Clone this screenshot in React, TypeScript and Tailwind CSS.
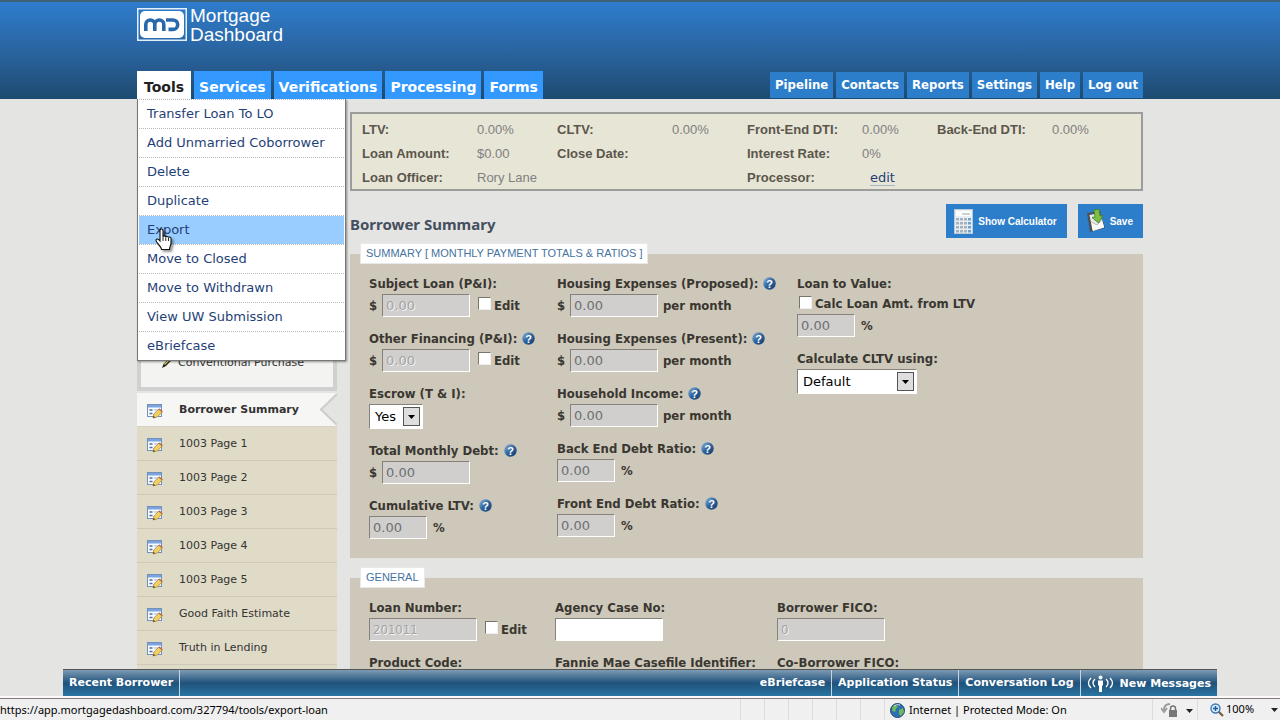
import React from "react";
import clsx from "clsx";

const tahoma = "font-['DejaVu_Sans_Condensed','DejaVu_Sans',sans-serif]";
const verdana = "font-['DejaVu_Sans',sans-serif]";
const arial = "font-['Liberation_Sans',sans-serif]";

const mainTabs = ["Tools", "Services", "Verifications", "Processing", "Forms"];
const accountTabs = [
  "Pipeline",
  "Contacts",
  "Reports",
  "Settings",
  "Help",
  "Log out",
];

const toolItems = [
  "Transfer Loan To LO",
  "Add Unmarried Coborrower",
  "Delete",
  "Duplicate",
  "Export",
  "Move to Closed",
  "Move to Withdrawn",
  "View UW Submission",
  "eBriefcase",
];

const pages = [
  "Borrower Summary",
  "1003 Page 1",
  "1003 Page 2",
  "1003 Page 3",
  "1003 Page 4",
  "1003 Page 5",
  "Good Faith Estimate",
  "Truth in Lending",
  "Closing Costs",
];

const Logo = () => (
  <svg width="50" height="33" viewBox="0 0 50 33" fill="none">
    <rect x="0.75" y="0.75" width="48.5" height="31.5" stroke="#e4f0fb" strokeWidth="1.5" />
    <rect x="3" y="3" width="44" height="27" rx="5" fill="#fff" />
    <path
      d="M8.800 23v-6.500a4.500 4.500 0 0 1 9 0V23M17.800 16.500a4.500 4.500 0 0 1 9 0V23"
      stroke="#2a68ad"
      strokeWidth="3.600"
    />
    <path
      d="M29 12h7a4.700 4.700 0 0 1 0 9.400h-4.500"
      stroke="#2a68ad"
      strokeWidth="3.600"
    />
  </svg>
);

const HandCursor = () => (
  <svg
    className="absolute left-4 top-3 z-10 drop-shadow-[2px_2px_1px_rgba(0,0,0,0.4)]"
    width="18"
    height="23"
    viewBox="0 0 18 23"
  >
    <path
      d="M5 2.500c0-2 3-2 3 0V9c0-1.500 2.800-1.500 2.800.3 0-1.300 2.700-1.200 2.700.5 0-1.200 2.500-1 2.500.7V15c0 2-1.500 3.500-1.500 6.500H6.500C6.500 18.500 1 14.500 1 12.500s2-2 4 .5z"
      fill="#fff"
      stroke="#111"
      strokeWidth="1.100"
    />
    <path d="M8 9v4M10.800 9.500V13M13.500 10v3" stroke="#111" strokeWidth="0.900" />
  </svg>
);

const PageIcon = () => (
  <svg width="16" height="16" viewBox="0 0 16 16" className="shrink-0">
    <rect x="0.500" y="1.500" width="14" height="12" fill="#f7faff" stroke="#7390b8" />
    <rect x="1" y="2" width="13" height="2.500" fill="#7ba3e0" />
    <path d="M2.500 7h3M2.500 10.500h3" stroke="#4f6ea3" strokeWidth="1.300" />
    <path d="M7 7h5M7 10.500h2" stroke="#9db3d6" />
    <path
      d="M6 15l.8-4 5.200-5 3.300 2.800-5 5.200z"
      fill="#f2cf62"
      stroke="#b08a42"
      strokeWidth="0.800"
    />
    <path d="M6 15l.6-2.300 1.600 1.500z" fill="#444" />
    <path d="M12 6l3.300 2.800" stroke="#b4683f" strokeWidth="1.400" />
  </svg>
);

const PencilIcon = () => (
  <svg width="12" height="12" viewBox="0 0 12 12" className="shrink-0">
    <path d="M1 11l1.500-4L8.500.8l2.500 2L5 9z" fill="#222" />
    <path d="M3.500 7.500L8.800 2.200" stroke="#e8d84a" strokeWidth="1.300" />
  </svg>
);

const HelpIcon = () => (
  <svg width="13" height="13" viewBox="0 0 13 13" className="ml-[5px] mb-[2px] shrink-0" aria-hidden="true">
    <defs>
      <linearGradient id="help" x1="0" y1="0" x2="1" y2="1">
        <stop offset="0" stopColor="#8fb6dc" />
        <stop offset="0.500" stopColor="#2f639c" />
        <stop offset="1" stopColor="#123a6c" />
      </linearGradient>
    </defs>
    <circle cx="6.500" cy="6.500" r="6.200" fill="url(#help)" />
    <text
      x="6.500"
      y="10.500"
      textAnchor="middle"
      fontSize="11"
      fontWeight="bold"
      fontFamily="Liberation Sans"
      fill="#fff"
    >
      ?
    </text>
  </svg>
);

const CalculatorIcon = () => (
  <svg width="19" height="25" viewBox="0 0 19 25">
    <rect x="0.500" y="0.500" width="18" height="24" fill="#e9eef2" stroke="#b9cbdb" />
    <rect x="2" y="2" width="15" height="5" fill="#fbfdff" />
    <path d="M8 5h8" stroke="#9aa7b3" />
    {[9, 13, 17, 21].map((y) =>
      [2, 6, 10, 14].map((x) => (
        <rect
          key={`${x}-${y}`}
          x={x}
          y={y}
          width="3"
          height="2.500"
          fill={x === 14 ? "#6fa3cf" : "#a5b1bc"}
        />
      ))
    )}
  </svg>
);

const SaveIcon = () => (
  <svg width="20" height="24" viewBox="0 0 20 24">
    <path d="M1 4l13-2 5 17-15 4z" fill="#4b5158" />
    <path d="M3.500 6l10-2 4.500 14-11.500 3.500z" fill="#e6e9e8" />
    <path d="M5.500 13l5.500 3 5-5.500 2.200 8L7 22z" fill="#fbfbf9" />
    <path d="M5.500 13l5.500 3 5-5.500" fill="none" stroke="#a4aaae" strokeWidth="0.800" />
    <path
      d="M8 1l5-1 1 7 3-.5-4.500 7.500L6 8.500l3-.5z"
      fill="#7cc043"
      stroke="#3e7d20"
      strokeWidth="0.800"
    />
  </svg>
);

type LabelProps = { htmlFor?: string; help?: boolean; children: React.ReactNode };

const Label = ({ htmlFor, help, children }: LabelProps) => (
  <div className="flex items-center h-5 whitespace-nowrap">
    <label htmlFor={htmlFor}>{children}</label>
    {help && <HelpIcon />}
  </div>
);

type InputProps = {
  id: string;
  value?: string;
  width: string;
  faded?: boolean;
  editable?: boolean;
};

const TextInput = ({ id, value = "", width, faded, editable }: InputProps) => (
  <input
    id={id}
    type="text"
    defaultValue={value}
    readOnly={!editable}
    className={clsx(
      "h-[23px] px-[3px] border border-t-[#85827c] border-l-[#85827c] border-b-white border-r-white font-normal text-[13px] outline-none",
      width,
      editable ? "bg-white text-black" : "bg-[#d0cfcd]",
      !editable && (faded ? "text-[#a3a3a3] [text-shadow:1px_1px_0_#f4f4f4]" : "text-[#6f6f6f]"),
      width === "w-[108px]" ? tahoma : verdana
    )}
  />
);

const CheckBox = ({ id, label }: { id: string; label: string }) => (
  <div className="flex items-center gap-[3px] whitespace-nowrap">
    <input
      id={id}
      type="checkbox"
      className="appearance-none w-[13px] h-[13px] mb-1 bg-white border border-t-[#77746e] border-l-[#77746e] border-b-[#eee] border-r-[#eee]"
    />
    <label htmlFor={id}>{label}</label>
  </div>
);

type MoneyProps = {
  id: string;
  label: string;
  help?: boolean;
  edit?: boolean;
  monthly?: boolean;
};

const MoneyField = ({ id, label, help, edit, monthly }: MoneyProps) => (
  <div>
    <Label htmlFor={id} help={help}>
      {label}
    </Label>
    <div className="flex items-center">
      <span className="w-[13px]">$</span>
      <TextInput id={id} value="0.00" width="w-[88px]" faded={edit} />
      {edit && (
        <div className="ml-2">
          <CheckBox id={`${id}-edit`} label="Edit" />
        </div>
      )}
      {monthly && <span className="ml-[5px] whitespace-nowrap">per month</span>}
    </div>
  </div>
);

const PercentRow = ({ id }: { id: string }) => (
  <div className="flex items-center gap-[6px]">
    <TextInput id={id} value="0.00" width="w-[58px]" />
    <span>%</span>
  </div>
);

const PercentField = ({ id, label }: { id: string; label: string }) => (
  <div>
    <Label htmlFor={id} help>
      {label}
    </Label>
    <PercentRow id={id} />
  </div>
);

type SelectProps = { id: string; label: string; options: string[]; width: string };

const SelectField = ({ id, label, options, width }: SelectProps) => (
  <div>
    <Label htmlFor={id}>{label}</Label>
    <div className={clsx("relative", width)}>
      <select
        id={id}
        className={clsx(
          "appearance-none block w-full h-[25px] pl-[5px] bg-white text-black font-normal text-[13px] border border-t-[#85827c] border-l-[#85827c] border-b-white border-r-white",
          verdana
        )}
      >
        {options.map((o) => (
          <option key={o}>{o}</option>
        ))}
      </select>
      <span className="pointer-events-none absolute right-[3px] top-[3px] w-[17px] h-[19px] bg-[#dedede] border border-[#555] flex items-center justify-center">
        <svg width="7" height="4" viewBox="0 0 7 4">
          <path d="M0 0h7L3.500 4z" fill="#000" />
        </svg>
      </span>
    </div>
  </div>
);

const Panel = ({ title, children }: { title: string; children: React.ReactNode }) => (
  <fieldset className="relative bg-[#cdc8ba] pl-[19px] pt-5 pb-[19px]">
    <legend
      className={clsx(
        "absolute left-[10px] -top-[11px] h-[21px] px-[5px] bg-white border border-[#e8e8e8] text-[11px] leading-[19px] text-[#47729f] whitespace-nowrap font-normal",
        arial
      )}
    >
      {title}
    </legend>
    {children}
  </fieldset>
);

const Header = () => (
  <header className="relative z-20 h-[99px] shrink-0 border-t-2 border-[#3f617a] bg-linear-to-b from-[#2e7dcd] via-[#2a64a1] to-[#1d4b70]">
    <div className="max-w-[1006px] h-full mx-auto flex flex-col justify-between">
      <a href="#" className="flex items-start gap-[3px] pt-[6px]">
        <Logo />
        <span className={clsx("text-white text-[19px] leading-[19px] -mt-[2px]", arial)}>
          Mortgage
          <br />
          Dashboard
        </span>
      </a>
      <div className="flex justify-between items-end">
        <nav className={clsx("flex gap-[3px] font-bold text-[14px]", verdana)}>
          {mainTabs.map((tab, i) => (
            <div key={tab} className="relative">
              <a
                href="#"
                className={clsx(
                  "block h-7 pt-[6px] leading-5",
                  i === 0 ? "bg-white text-[#222] px-[7px]" : "bg-[#3399ff] text-white px-[5px]"
                )}
              >
                {tab}
              </a>
              {i === 0 && <ToolsMenu />}
            </div>
          ))}
        </nav>
        <nav className={clsx("flex gap-[3px] mb-px font-bold text-[13px]", tahoma)}>
          {accountTabs.map((tab) => (
            <a
              key={tab}
              href="#"
              className="h-[26px] px-[5px] leading-[25px] bg-[#2c7ecb] text-white whitespace-nowrap"
            >
              {tab}
            </a>
          ))}
        </nav>
      </div>
    </div>
  </header>
);

const ToolsMenu = () => (
  <ul
    className={clsx(
      "absolute left-0 top-full w-[209px] px-px bg-white border border-t-0 border-[#777] shadow-[1px_1px_2px_rgba(0,0,0,0.4)] font-normal text-[13px]",
      verdana
    )}
  >
    {toolItems.map((item) => (
      <li key={item} className="relative border-t border-dotted border-[#b9b9b9]">
        <a
          href="#"
          className={clsx(
            "block h-7 pl-2 leading-7 text-[#1f3f77] whitespace-nowrap",
            item === "Export" && "bg-[#99ccff]"
          )}
        >
          {item}
        </a>
        {item === "Export" && <HandCursor />}
      </li>
    ))}
  </ul>
);

const Sidebar = () => (
  <aside className={clsx("w-[200px] shrink-0 text-[11px] text-[#333]", verdana)}>
    <div className="h-[292px] flex items-end border-4 border-t-0 border-[#d0d0d0] bg-[#f3f3f1] pl-5 pb-4">
      <div className="flex items-center gap-[5px]">
        <PencilIcon />
        <span>Conventional Purchase</span>
      </div>
    </div>
    <nav className="mt-[2px]">
      {pages.map((page, i) => (
        <a
          key={page}
          href="#"
          className={clsx(
            "relative flex items-center gap-4 h-[34px] pl-[10px] pt-[2px] border-b",
            i === 0
              ? "bg-[#f6f6f4] border-[#d6d3c6] font-bold"
              : "bg-[#e0dbc7] border-[#cfcab7]"
          )}
        >
          <PageIcon />
          {page}
          {i === 0 && (
            <svg className="absolute right-0 top-0" width="17" height="33" viewBox="0 0 17 33">
              <path d="M17 1L1 16.500 17 32" fill="#e4e4e2" stroke="#cdcdcb" strokeWidth="2" />
            </svg>
          )}
        </a>
      ))}
    </nav>
  </aside>
);

const LoanInfo = () => (
  <dl
    className={clsx(
      "grid grid-cols-[115px_80px_115px_75px_115px_75px_115px_1fr] auto-rows-[24px] items-center h-[79px] pl-[10px] pt-1 border-2 border-[#9c9c9a] bg-[#e7e5d6] text-[13px] font-normal text-[#808080] [&_dt]:font-bold [&_dt]:text-[#5b564b]",
      arial
    )}
  >
    <dt>LTV:</dt>
    <dd>0.00%</dd>
    <dt>CLTV:</dt>
    <dd>0.00%</dd>
    <dt>Front-End DTI:</dt>
    <dd>0.00%</dd>
    <dt>Back-End DTI:</dt>
    <dd>0.00%</dd>
    <dt>Loan Amount:</dt>
    <dd>$0.00</dd>
    <dt>Close Date:</dt>
    <dd />
    <dt>Interest Rate:</dt>
    <dd className="col-span-3">0%</dd>
    <dt>Loan Officer:</dt>
    <dd className="col-span-3">Rory Lane</dd>
    <dt>Processor:</dt>
    <dd className="pl-2">
      <a href="#" className={clsx("text-[#1f3f77] border-b border-[#a9b8c9]", verdana)}>
        edit
      </a>
    </dd>
  </dl>
);

const buttonClass =
  "flex items-center h-[34px] px-2 bg-[#2c7ecb] text-white font-bold text-[10px]";

const App = () => {
  return (
    <div className="h-screen flex flex-col overflow-hidden bg-[#e4e4e2]">
      <div className="relative flex-1 min-h-0 flex flex-col overflow-hidden">
        <Header />
        <div className="w-full max-w-[1006px] mx-auto flex gap-[13px]">
          <Sidebar />
          <main className={clsx("flex-1 pt-[13px] text-[13px] font-bold text-[#3a3731]", tahoma)}>
            <LoanInfo />
            <div className="flex items-center justify-between h-[34px] mt-[13px] mb-4">
              <h1 className="pt-[6px] text-[15px] text-[#454f5f] font-bold font-['Noto_Sans',sans-serif]">
                Borrower Summary
              </h1>
              <div className={clsx("flex gap-[11px]", arial)}>
                <button type="button" className={clsx(buttonClass, "gap-[5px] pr-[10px]")}>
                  <CalculatorIcon />
                  Show Calculator
                </button>
                <button type="button" className={clsx(buttonClass, "gap-1 pr-[10px]")}>
                  <SaveIcon />
                  Save
                </button>
              </div>
            </div>

            <Panel title="SUMMARY [ MONTHLY PAYMENT TOTALS & RATIOS ]">
              <div className="grid grid-cols-[188px_240px_1fr]">
                <div className="flex flex-col gap-3">
                  <MoneyField id="subject-loan" label="Subject Loan (P&I):" edit />
                  <MoneyField id="other-financing" label="Other Financing (P&I):" help edit />
                  <SelectField
                    id="escrow"
                    label="Escrow (T & I):"
                    options={["Yes", "No"]}
                    width="w-[54px]"
                  />
                  <MoneyField id="monthly-debt" label="Total Monthly Debt:" help />
                  <PercentField id="cumulative-ltv" label="Cumulative LTV:" />
                </div>
                <div className="flex flex-col gap-3">
                  <MoneyField id="housing-proposed" label="Housing Expenses (Proposed):" help monthly />
                  <MoneyField id="housing-present" label="Housing Expenses (Present):" help monthly />
                  <MoneyField id="household-income" label="Household Income:" help monthly />
                  <PercentField id="back-ratio" label="Back End Debt Ratio:" />
                  <PercentField id="front-ratio" label="Front End Debt Ratio:" />
                </div>
                <div className="flex flex-col gap-3">
                  <div>
                    <Label htmlFor="ltv">Loan to Value:</Label>
                    <div className="flex items-center h-5 pl-[2px]">
                      <CheckBox id="calc-ltv" label="Calc Loan Amt. from LTV" />
                    </div>
                    <PercentRow id="ltv" />
                  </div>
                  <SelectField
                    id="cltv"
                    label="Calculate CLTV using:"
                    options={["Default"]}
                    width="w-[120px]"
                  />
                </div>
              </div>
            </Panel>

            <div className="mt-5">
              <Panel title="GENERAL">
                <div className="grid grid-cols-[186px_222px_1fr] gap-y-3">
                  <div>
                    <Label htmlFor="loan-number">Loan Number:</Label>
                    <div className="flex items-center gap-2">
                      <TextInput id="loan-number" value="201011" width="w-[108px]" faded />
                      <CheckBox id="loan-number-edit" label="Edit" />
                    </div>
                  </div>
                  <div>
                    <Label htmlFor="agency-case">Agency Case No:</Label>
                    <TextInput id="agency-case" width="w-[108px]" editable />
                  </div>
                  <div>
                    <Label htmlFor="fico">Borrower FICO:</Label>
                    <TextInput id="fico" value="0" width="w-[108px]" faded />
                  </div>
                  <Label>Product Code:</Label>
                  <Label>Fannie Mae Casefile Identifier:</Label>
                  <Label>Co-Borrower FICO:</Label>
                </div>
              </Panel>
            </div>
          </main>
        </div>

        <nav
          className={clsx(
            "absolute bottom-0 inset-x-[63px] z-10 h-[27px] flex items-stretch border-t border-[#555] bg-linear-to-b from-[#7d9bb3] via-[#1f527c] via-50% to-[#2a76a3] text-white font-bold text-[11px] leading-[25px] whitespace-nowrap [&>a]:px-[6px] [&>a]:border-[#c5d6e3]",
            verdana
          )}
        >
          <a href="#" className="border-r">
            Recent Borrower
          </a>
          <a href="#" className="ml-auto border-r">
            eBriefcase
          </a>
          <a href="#" className="border-r">
            Application Status
          </a>
          <a href="#" className="border-r">
            Conversation Log
          </a>
          <a href="#" className="flex items-center gap-[6px]">
            <svg width="27" height="18" viewBox="0 0 27 18" fill="none" stroke="#fff">
              <path d="M4 4Q-1 9 4 14M8 5Q4 9 8 13M23 4q5 5 0 10M19 5q4 4 0 8" strokeWidth="1.300" />
              <circle cx="13.500" cy="3.500" r="2" fill="#fff" stroke="none" />
              <path d="M11 6.500h5v5h-1V18h-3v-6.500h-1z" fill="#fff" stroke="none" />
            </svg>
            New Messages
          </a>
        </nav>
      </div>

      <footer className="h-6 shrink-0 border-t-2 border-[#fafafa] bg-[#f0f0f0] text-[11px] text-black font-['Noto_Sans',sans-serif] whitespace-nowrap">
        <div className="h-full flex items-center justify-between border-t border-[#857a78]">
          <span className="pt-[2px]">
            https://app.mortgagedashboard.com/327794/tools/export-loan
          </span>
          <div className="flex items-center self-stretch">
            {[1, 2, 3, 4, 5, 6].map((n) => (
              <span key={n} className="w-6 self-stretch border-l border-[#dcdcdc]" />
            ))}
            <span className="w-[268px] self-stretch flex items-center gap-1 pt-[2px] pl-[5px] border-l border-[#dcdcdc]">
              <svg width="15" height="15" viewBox="0 0 15 15">
                <circle cx="7.500" cy="7.500" r="7" fill="#2d6fb4" stroke="#23486f" />
                <path d="M2 4l4-2.500 2 1.500-2 3-1 3-2.500-1zM9 7l4-2 1 4-3 4-2-2z" fill="#6cb85a" />
                <path d="M4 3q3-2 6-1" stroke="#d5ecff" />
              </svg>
              Internet | Protected Mode: On
            </span>
            <span className="w-[45px] self-stretch flex items-center gap-2 pt-[2px] pl-2 border-l border-[#dcdcdc]">
              <svg width="17" height="15" viewBox="0 0 17 15" fill="none">
                <path d="M9 1Q3 1 3 7M0 5l3 4 3-4" stroke="#999" strokeWidth="1.800" />
                <rect x="8" y="7" width="8" height="7" fill="#777" />
                <path d="M9.500 7V5.500a2.500 2.500 0 0 1 5 0V7" stroke="#777" strokeWidth="1.500" />
              </svg>
              <Caret />
            </span>
            <span className="self-stretch flex items-center gap-[2px] pl-3 pr-[2px] border-l border-[#dcdcdc]">
              <svg width="14" height="14" viewBox="0 0 14 14" fill="none">
                <path d="M8.500 8.500L13 13" stroke="#7a5a42" strokeWidth="2.200" />
                <circle cx="5.500" cy="5.500" r="4.500" fill="#d7ebfb" stroke="#3d78b5" strokeWidth="1.400" />
                <path d="M3 5.500h5M5.500 3v5" stroke="#1d5aa0" strokeWidth="1.400" />
              </svg>
              <span className="w-[43px]">100%</span>
              <Caret />
            </span>
          </div>
        </div>
      </footer>
    </div>
  );
};

const Caret = () => (
  <svg width="7" height="4" viewBox="0 0 7 4" className="shrink-0">
    <path d="M0 0h7L3.500 4z" fill="#222" />
  </svg>
);

export default App;
